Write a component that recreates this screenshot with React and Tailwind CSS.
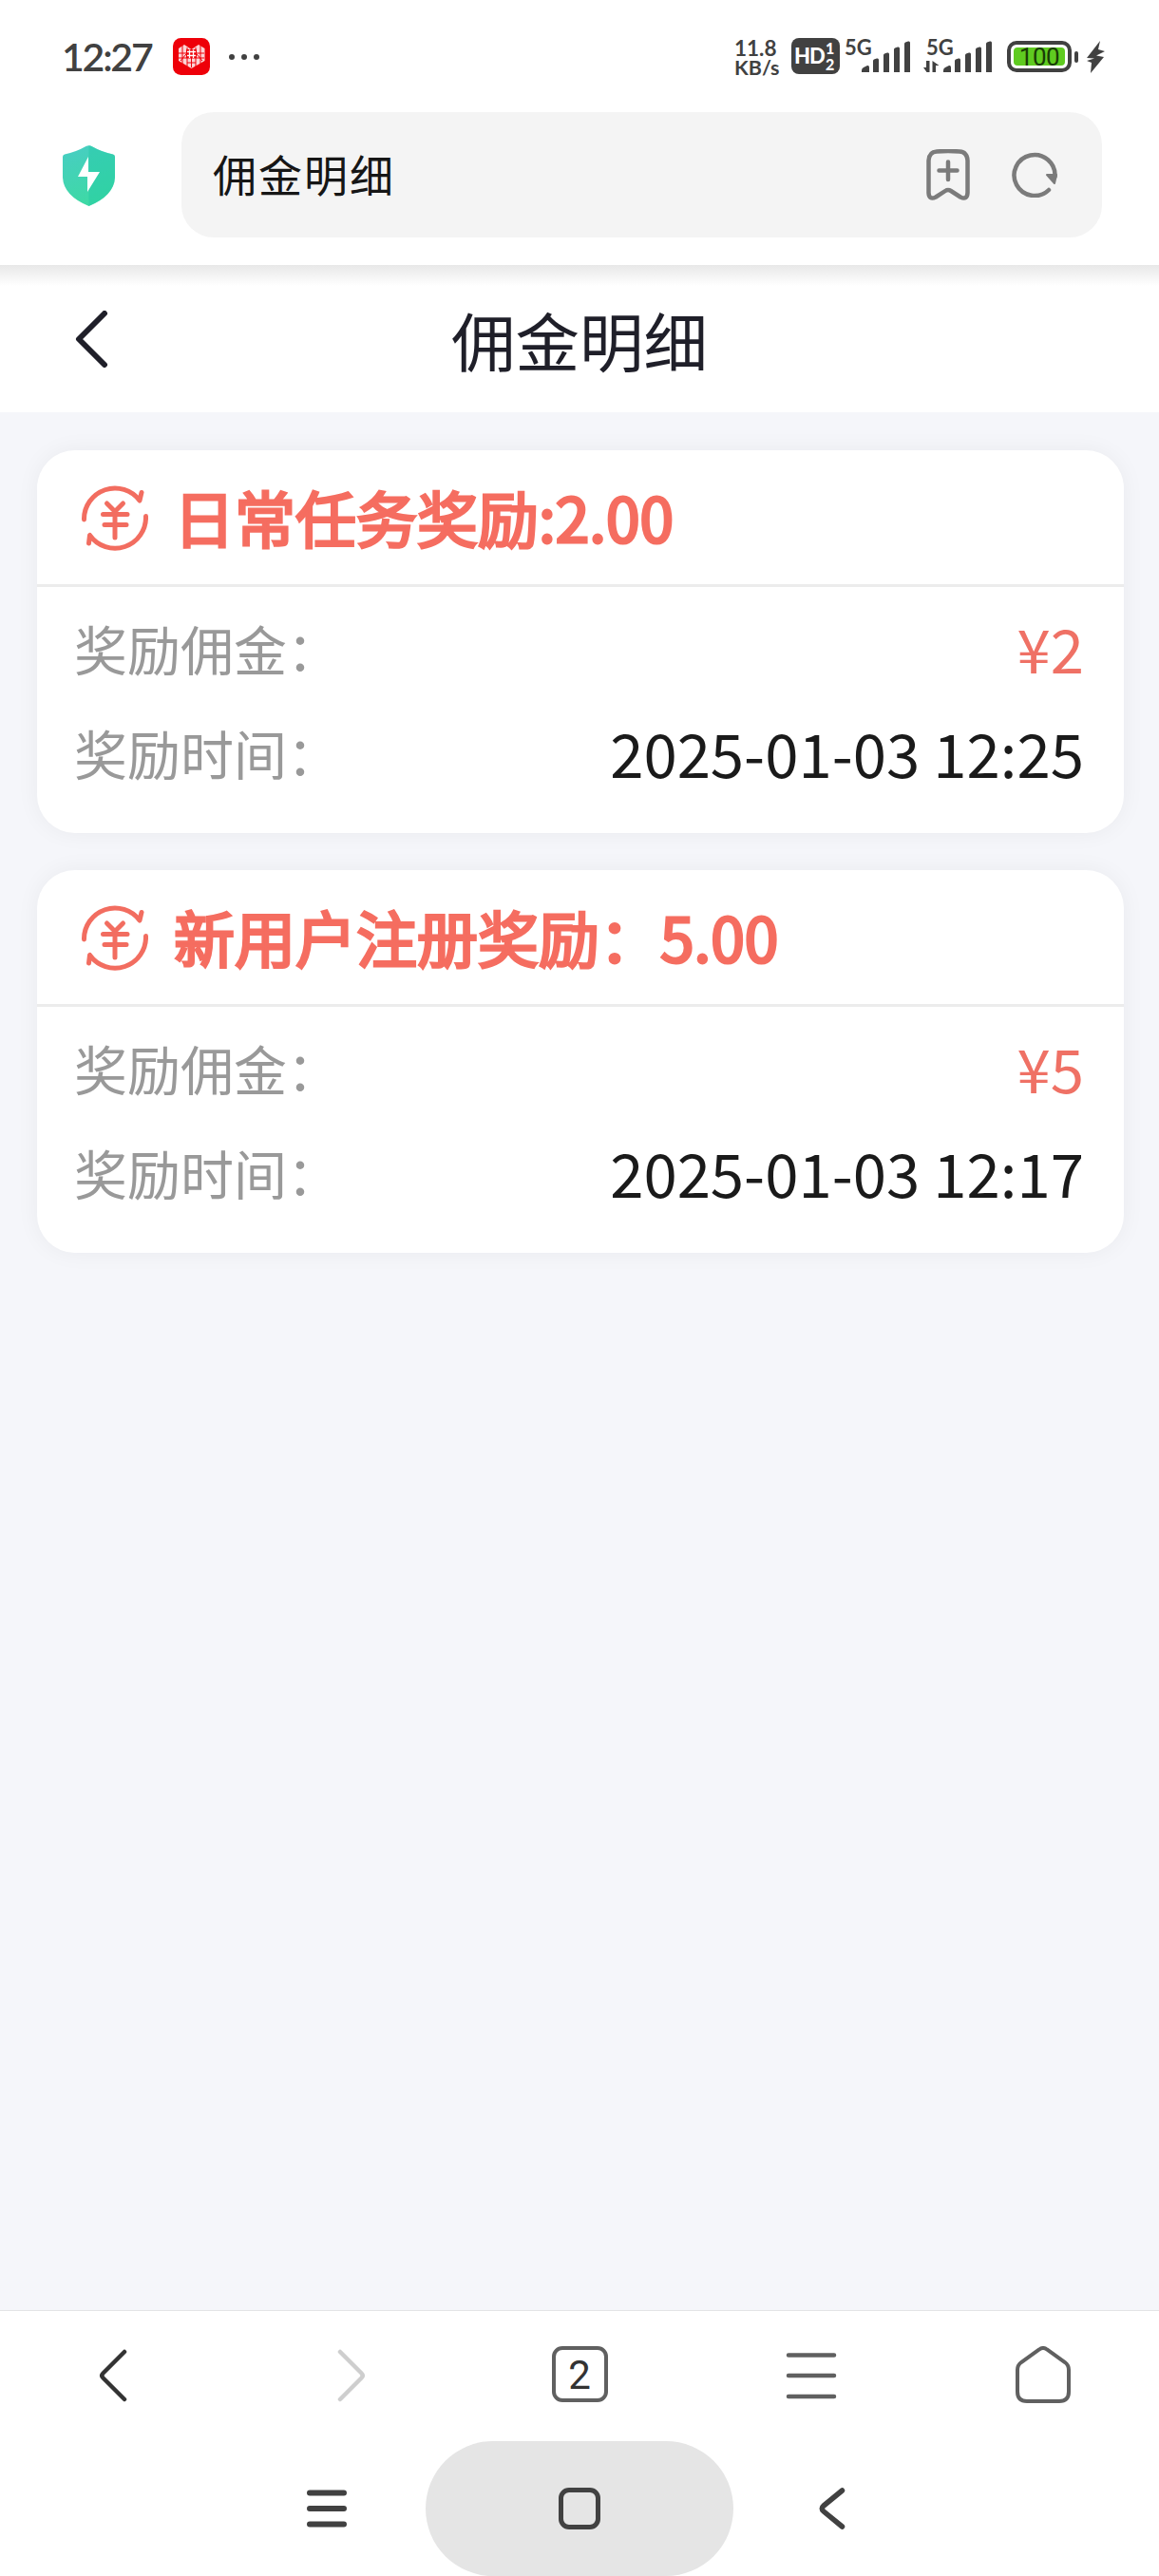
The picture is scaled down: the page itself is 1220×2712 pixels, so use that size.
const RECORDS = [
  { title: '日常任务奖励:2.00', amount: '¥2', time: '2025-01-03 12:25' },
  { title: '新用户注册奖励：5.00', amount: '¥5', time: '2025-01-03 12:17' },
]

function SignalBars() {
  return (
    <svg width="52" height="34" viewBox="0 0 52 34" fill="#414141">
      <path d="M1 33V31Q1 29 3 28L7 26Q9 25.500 9 28V33Z" />
      <path d="M13 33V21Q13 20 14 19.500L17 18.500Q19 18 19 20V33Z" />
      <path d="M24 33V15Q24 14 25 13.500L28 12.500Q30 12 30 14V33Z" />
      <path d="M35 33V9Q35 8 36 7.500L39 6.500Q41 6 41 8V33Z" />
      <path d="M46 33V3Q46 2 47 1.500L50 .5Q52 0 52 2V33Z" />
    </svg>
  )
}

function AppBadge() {
  return (
    <svg width="39" height="39" viewBox="0 0 39 39" className="ml-[22px] shrink-0">
      <rect width="39" height="39" rx="8.500" fill="#ee0009" />
      <path d="M6 11L12 7L19.500 12L27 7L33.500 11V24L19.500 32L6 24Z" fill="#fbd5d7" />
      <path d="M6 16H15M24 16H33M6 21H33M10 8V28M15 10V30M24 10V30M29 8V28M15 26H24M19.500 21V31M8 24L14 17M31 24L25 17" stroke="#ee0009" strokeWidth="1" />
      <rect x="14" y="12" width="11" height="9" fill="#ee0009" />
      <path d="M15 14.500H24M15 18.500H24M17.500 12.500V21M21.500 12.500V21" stroke="#fff" strokeWidth="1.300" />
    </svg>
  )
}

function StatusBar() {
  return (
    <div className="h-[118px] pt-10 pl-[65px] pr-[57px] flex items-start justify-between text-[#414141]">
      <div className="flex items-center h-[39px]">
        <span className="w-[95px] font-[Lato] font-semibold text-[41px] leading-none tracking-[-2.2px] whitespace-nowrap">12:27</span>
        <AppBadge />
        <div className="ml-5 flex gap-[7px]">
          <i className="size-1.5 rounded-full bg-[#414141]" />
          <i className="size-1.5 rounded-full bg-[#414141]" />
          <i className="size-1.5 rounded-full bg-[#414141]" />
        </div>
      </div>

      <div className="flex items-start h-[42px] font-[Lato] font-bold">
        <div className="w-[60px] text-[22.500px] leading-[21px] whitespace-nowrap">
          <div>11.8</div>
          <div className="text-[21.500px]">KB/s</div>
        </div>
        <div className="w-[51px] h-[38px] rounded-lg bg-[#414141] text-white flex items-center pl-[3px]">
          <span className="w-[33px] text-[22px] leading-none font-black tracking-[-1px]">HD</span>
          <span className="flex flex-col text-[16px] leading-[17px] text-center font-black">
            <span>1</span>
            <span>2</span>
          </span>
        </div>
        <div className="flex ml-1.5 w-[68px]">
          <span className="w-4 -ml-px mr-px text-[22px] leading-[20px] whitespace-nowrap">5G</span>
          <div className="mt-[3px]"><SignalBars /></div>
        </div>
        <div className="flex ml-[18px] w-[68px]">
          <div className="w-4 -ml-px mr-px shrink-0">
            <div className="text-[22px] leading-[20px] whitespace-nowrap">5G</div>
            <svg width="17" height="12" viewBox="0 0 17 12" className="mt-1 -ml-[3px]" fill="#414141">
              <path d="M3.500 12L0 7H3V0H6.500V12ZM9.500 0L16.500 5H13V12H9.500Z" />
            </svg>
          </div>
          <div className="mt-[3px]"><SignalBars /></div>
        </div>
        <div className="ml-4 mt-[3px] w-[68px] h-[33px] rounded-[10px] border-4 border-[#414141] p-[3px]">
          <div className="h-full rounded bg-[#5fcb20] text-[#193b06] font-[Roboto] text-[26px] font-normal leading-[20px] text-center tracking-[-0.5px]">100</div>
        </div>
        <i className="ml-[3px] mt-[14px] w-1 h-3 rounded-full bg-[#414141]" />
        <svg width="20" height="34" viewBox="0 0 20 34" className="ml-2 mt-[3px]" fill="#414141">
          <path d="M15 0L1 18L9 18.500L1 21L6 23L5 34L19 17L11 15.500L20 11L13 9Z" />
        </svg>
      </div>
    </div>
  )
}

function AddressBar() {
  return (
    <div className="h-[161px] pl-[66px] pr-[60px] flex items-start">
      <svg width="55" height="64" viewBox="0 0 55 64" className="mt-[35px] mr-[70px]">
        <defs>
          <linearGradient id="shield" x1="0" y1="0" x2="0.300" y2="1">
            <stop offset="0" stopColor="#48cdc4" />
            <stop offset="1" stopColor="#3ed9a5" />
          </linearGradient>
        </defs>
        <path d="M24.500 1Q27.500 -.5 30.500 1Q41 7 53 9.500Q55 10 55 12V34Q54 53 27.500 64Q1 53 0 34V12Q0 10 2 9.500Q14 7 24.500 1Z" fill="url(#shield)" />
        <path d="M27.500 0Q29 0 30.500 1Q41 7 53 9.500Q55 10 55 12V34Q54 53 27.500 64Z" fill="#22c9a4" opacity=".45" />
        <path d="M27 12L16 33H26V49L39 28H27Z" fill="#fff" />
      </svg>
      <div className="flex-1 h-[132px] rounded-[34px] bg-[#f4f4f4] pl-[33px] pr-[46px] flex items-center">
        <span className="flex-1 pb-1 text-[46px] leading-none tracking-[2px] text-[#161616]">佣金明细</span>
        <svg width="48" height="54" viewBox="0 0 48 54" className="mr-[43px]" fill="none" stroke="#7b7b7b" strokeWidth="4.500" strokeLinecap="round" strokeLinejoin="round">
          <path d="M12 2.500Q24 1.500 36 2.500Q44 3 44.500 12V46Q44 54 37 50.500L27 44Q24 42 21 44L11 50.500Q4 54 3.500 46V12Q4 3 12 2.500Z" />
          <path d="M24 13.500V32M14.500 22.500H33.500" />
        </svg>
        <svg width="49" height="48" viewBox="0 0 49 48" fill="none" stroke="#7b7b7b" strokeWidth="4.500" strokeLinecap="round">
          <path d="M39 40A21.500 21.500 0 1 1 45.500 26" />
          <path d="M37 24H47L45 33Z" fill="#7b7b7b" strokeWidth="2" strokeLinejoin="round" />
        </svg>
      </div>
    </div>
  )
}

function YuanCycleIcon() {
  return (
    <svg width="70" height="70" viewBox="0 0 70 70" fill="none" stroke="#f26d60" strokeWidth="5" strokeLinecap="round" strokeLinejoin="round">
      <path d="M2.500 37A32.500 32.500 0 0 1 61 17L63 8.500" />
      <path d="M67.500 33.500A32.500 32.500 0 0 1 8.500 53.500L7.500 62" />
      <path d="M26.500 20L35 28.500L43.500 20M22.500 31.500H48M24 42.500H47M35 29V56" />
    </svg>
  )
}

function RecordCard({ record }) {
  return (
    <section className="h-[403px] rounded-[40px] bg-white shadow-[0_0_24px_rgba(0,0,0,0.05)]">
      <div className="h-[144px] pl-[47px] border-b-[3px] border-[#ececec] flex items-center">
        <YuanCycleIcon />
        <h2 className="ml-[27px] pb-[3px] text-[64px] leading-none text-[#f56d60] whitespace-nowrap [-webkit-text-stroke:3px_#f56d60]">{record.title}</h2>
      </div>
      <div className="pl-[39px] pr-[42px] pt-[9px]">
        <div className="h-[110px] flex items-center justify-between">
          <span className="text-[56px] leading-none text-[#999]">奖励佣金：</span>
          <span className="text-[63.500px] leading-none text-[#ef7165]">{record.amount}</span>
        </div>
        <div className="h-[110px] flex items-center justify-between">
          <span className="text-[56px] leading-none text-[#999]">奖励时间：</span>
          <span className="text-[63.500px] leading-none text-[#1a1a1a]">{record.time}</span>
        </div>
      </div>
    </section>
  )
}

function BrowserToolbar() {
  return (
    <div className="h-[138px] border-t border-[#e3e4e6] grid grid-cols-5 pt-[37px] items-start justify-items-center">
      <svg width="30" height="56" viewBox="0 0 30 56" className="mt-[3px] -ml-[7px]" fill="none" stroke="#333" strokeWidth="4.500" strokeLinecap="round">
        <path d="M27 3L4.500 25.500Q2 28 4.500 30.500L27 53" />
      </svg>
      <svg width="30" height="56" viewBox="0 0 30 56" className="mt-[3px] ml-[7px]" fill="none" stroke="#cecece" strokeWidth="4.500" strokeLinecap="round">
        <path d="M3 3L25.500 25.500Q28 28 25.500 30.500L3 53" />
      </svg>
      <div className="size-[59px] rounded-[11px] border-4 border-[#606060] font-[Roboto] text-[42px] leading-[53px] text-center text-[#333]">2</div>
      <svg width="54" height="60" viewBox="0 0 54 60" stroke="#606060" strokeWidth="4.500" strokeLinecap="round">
        <path d="M3 9.500H51M3 31H51M3 53H51" />
      </svg>
      <svg width="58" height="60" viewBox="0 0 58 60" fill="none" stroke="#606060" strokeWidth="4">
        <path d="M25 3.500Q29 .5 33 3.500L52 17Q56 20 56 25V48Q56 58 46 58H12Q2 58 2 48V25Q2 20 6 17Z" />
      </svg>
    </div>
  )
}

function SystemNav() {
  return (
    <div className="h-[142px] flex items-center">
      <svg width="42" height="40" viewBox="0 0 42 40" className="ml-[323px]" stroke="#414141" strokeWidth="6" strokeLinecap="round">
        <path d="M3 3.500H39M3 20H39M3 36.500H39" />
      </svg>
      <div className="ml-[83px] w-[324px] h-full rounded-full bg-[#e5e5e5] flex items-center justify-center">
        <div className="size-[44px] rounded-[11px] border-[5px] border-[#414141]" />
      </div>
      <svg width="28" height="44" viewBox="0 0 28 44" className="ml-[90px]" fill="none" stroke="#414141" strokeWidth="5.500" strokeLinecap="round">
        <path d="M24.500 3L5 19Q1.500 22 5 25L24.500 41" />
      </svg>
    </div>
  )
}

export default function App() {
  return (
    <div className="w-[1220px] h-[2712px] flex flex-col overflow-hidden bg-white font-['Noto_Sans_CJK_SC',sans-serif]">
      <StatusBar />
      <AddressBar />

      <header className="h-[155px] shrink-0 bg-linear-to-b from-[#e8e8e8] to-white to-[22px] grid grid-cols-[1fr_auto_1fr] items-center">
        <svg width="36" height="60" viewBox="0 0 36 60" className="ml-[79px]" fill="none" stroke="#1f1f29" strokeWidth="6" strokeLinecap="round" strokeLinejoin="round">
          <path d="M31 3L4 30L31 57" />
        </svg>
        <h1 className="text-[67.500px] leading-none text-[#1f1f29]">佣金明细</h1>
      </header>

      <main className="flex-1 bg-[#f5f6fa] pl-[39px] pr-[37px] pt-10 flex flex-col gap-[39px]">
        {RECORDS.map(r => <RecordCard key={r.time} record={r} />)}
      </main>

      <BrowserToolbar />
      <SystemNav />
    </div>
  )
}
